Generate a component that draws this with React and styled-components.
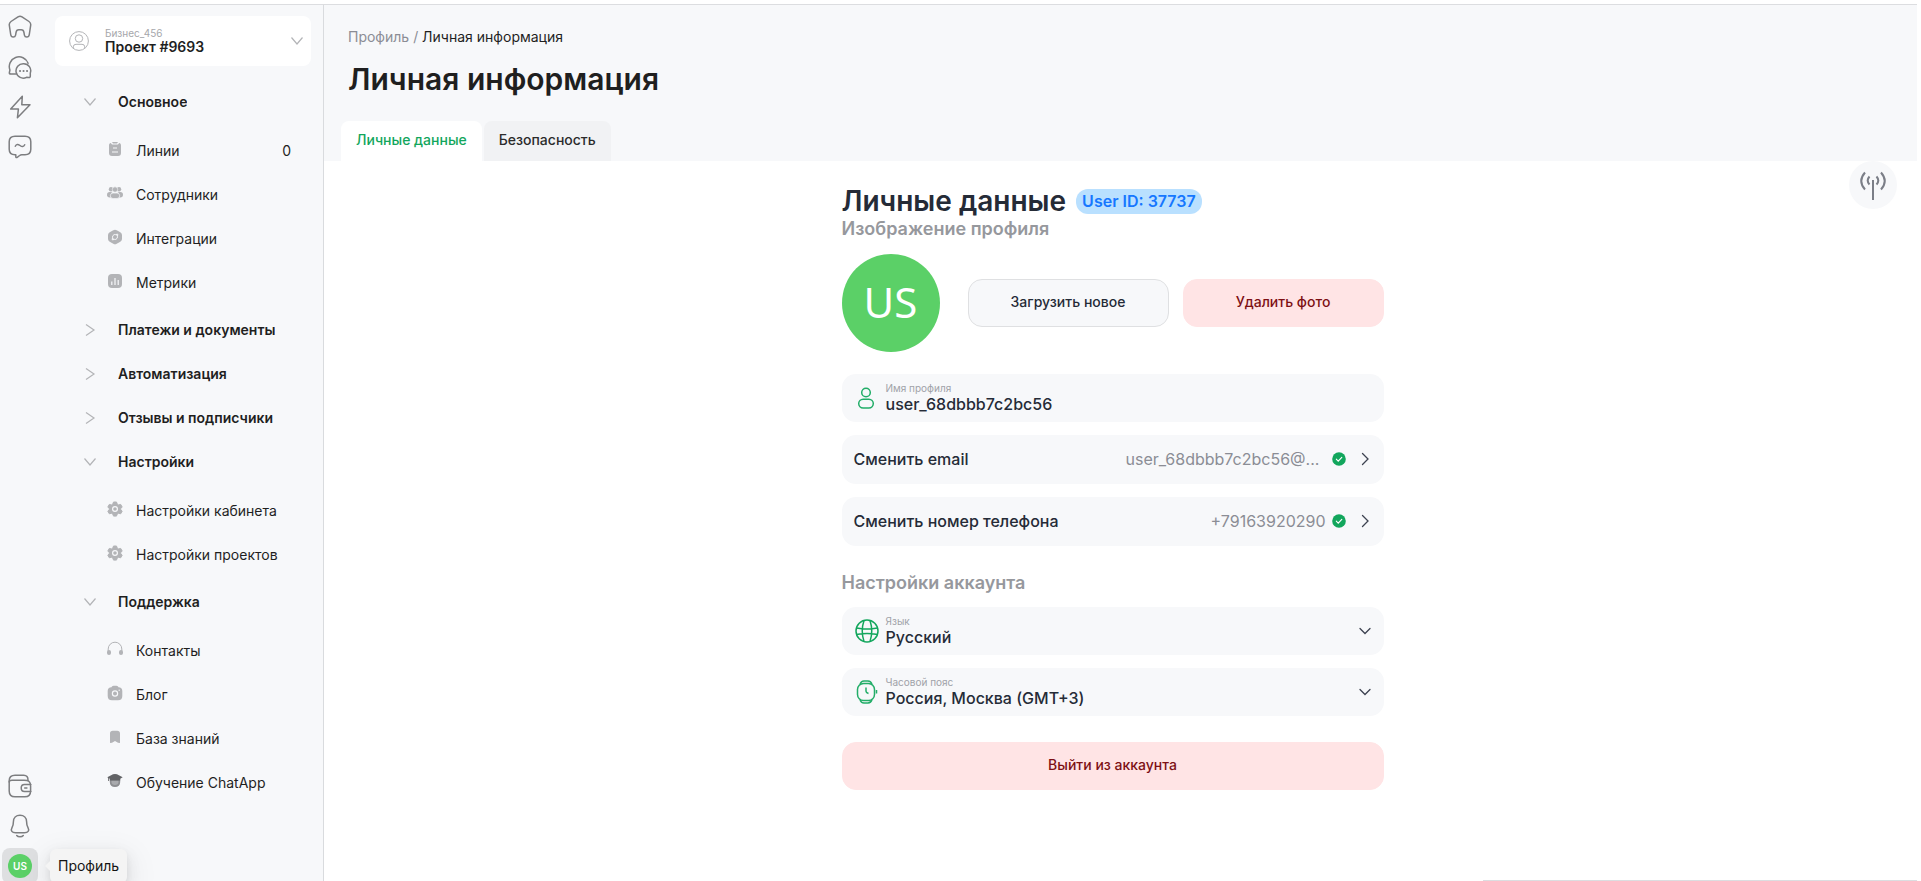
import { useState } from 'react';
import styled, { createGlobalStyle } from 'styled-components';

const sections = [
  {
    title: 'Основное',
    items: [
      { label: 'Линии', icon: 'lines', count: 0 },
      { label: 'Сотрудники', icon: 'team' },
      { label: 'Интеграции', icon: 'integrations' },
      { label: 'Метрики', icon: 'metrics' },
    ],
  },
  { title: 'Платежи и документы', items: [] },
  { title: 'Автоматизация', items: [] },
  { title: 'Отзывы и подписчики', items: [] },
  {
    title: 'Настройки',
    items: [
      { label: 'Настройки кабинета', icon: 'gear' },
      { label: 'Настройки проектов', icon: 'gear' },
    ],
  },
  {
    title: 'Поддержка',
    items: [
      { label: 'Контакты', icon: 'headphones' },
      { label: 'Блог', icon: 'camera' },
      { label: 'База знаний', icon: 'bookmark' },
      { label: 'Обучение ChatApp', icon: 'education' },
    ],
  },
];

const tabs = ['Личные данные', 'Безопасность'];

const menuIcons = {
  lines: (
    <>
      <path d="M2 4.5C2 3 2.7 2.2 3.800 2L5 3.500h6L12.200 2C13.300 2.200 14 3 14 4.500V12c0 2-1 3-3 3H5c-2 0-3-1-3-3z" />
      <path d="M5 1h6l-1 1.500H6z" />
      <path d="M6 7h4M5 11h6" stroke="#f7f8fa" strokeWidth="1.200" />
    </>
  ),
  team: (
    <>
      <circle cx="4" cy="4.200" r="2.200" />
      <circle cx="12" cy="4.200" r="2.200" />
      <rect x="0" y="7" width="6" height="5.500" rx="2.700" />
      <rect x="10" y="7" width="6" height="5.500" rx="2.700" />
      <circle cx="8" cy="4.500" r="2.700" stroke="#f7f8fa" strokeWidth=".6" />
      <rect x="3.300" y="8" width="9.400" height="5.600" rx="2.800" stroke="#f7f8fa" strokeWidth=".7" />
    </>
  ),
  integrations: (
    <>
      <path d="M6.300 1.200Q8 .2 9.700 1.200l3.600 2Q15 4.200 15 6v4q0 1.800-1.700 2.800l-3.600 2q-1.700 1-3.400 0l-3.600-2Q1 11.800 1 10V6q0-1.800 1.700-2.800z" />
      <path d="M5.500 8.800l-.3 2 2-.3M10.500 7.200l.3-2-2 .3M6.300 9.700a2.400 2.400 0 0 1 2.500-4M9.700 6.300a2.400 2.400 0 0 1-2.500 4" fill="none" stroke="#f7f8fa" />
    </>
  ),
  metrics: (
    <>
      <rect x="1" y="1" width="14" height="14" rx="4" />
      <path d="M4.800 8.500V12M8 5v7M11.200 7v5" stroke="#f7f8fa" strokeWidth="1.200" />
    </>
  ),
  gear: (
    <>
      <path
        d="M6.500 1h3l.6 2 1.500.9 2.100-.5 1.500 2.600-1.400 1.500v1.200l1.400 1.500-1.500 2.600-2.100-.5-1.500.9-.6 1.900h-3l-.6-1.900-1.500-.9-2.100.5L.8 10.200l1.400-1.500V7.500L.8 6l1.500-2.600 2.100.5L5.900 3z"
        stroke="#b3b4b7"
        strokeLinejoin="round"
      />
      <circle cx="8" cy="8" r="2.400" fill="none" stroke="#f7f8fa" strokeWidth="1.200" />
    </>
  ),
  headphones: (
    <>
      <path d="M1.200 10V8a6.800 6.800 0 0 1 13.600 0v2" fill="none" stroke="#b3b4b7" />
      <rect x="0" y="9" width="4" height="5" rx="2" />
      <rect x="12" y="9" width="4" height="5" rx="2" />
    </>
  ),
  camera: (
    <>
      <path d="M4.500 2.200C5 1 6 .7 8 .7s3 .3 3.500 1.500C14 2.200 15.300 3.500 15.300 6v5c0 2.800-1.300 4.200-4.300 4.200H5C2 15.200.7 13.800.7 11V6c0-2.500 1.300-3.800 3.800-3.800z" />
      <circle cx="8" cy="8.500" r="2.600" fill="none" stroke="#f7f8fa" strokeWidth="1.200" />
      <path d="M11.500 5.200H13" stroke="#f7f8fa" />
    </>
  ),
  bookmark: <path d="M3 4.500C3 2.600 4 1.700 5.800 1.700h4.400c1.800 0 2.800.9 2.800 2.800V14l-2-.2-3-1.800-3 1.800L3 14z" />,
  education: (
    <>
      <path d="M2.800 5h10.400v4c0 3.200-2 5-5.200 5s-5.200-1.800-5.200-5z" fill="#8d8e91" />
      <path d="M4.500 7.500h7V9c0 2-1.500 3-3.500 3s-3.500-1-3.500-3z" fill="#a9aaad" />
      <path d="M.3 4.200L6 1.300Q8 .5 10 1.300l5.700 2.900-2.500 1.600v1.700H2.800V5.800L1.800 5.300V8H1V4.800z" fill="#626366" />
    </>
  ),
};

const railIcons = {
  home: <path d="M10 1.800q2-1.200 4 0l7 4.700q2 1.400 1.700 3.700l-1.400 9.300q-.4 2.600-2.500 2.600-2 0-2.400-2l-.4-2.500q-.4-2.800-2.800-2.800h-2.400q-2.400 0-2.800 2.800l-.4 2.500q-.4 2-2.400 2-2.100 0-2.500-2.600L1.300 10.200Q1 7.900 3 6.500z" />,
  chats: (
    <>
      <path d="M8 19H2.800q-1.700 0-1.400-1.500L1.900 15A9.700 9.700 0 1 1 20.100 8.200" />
      <path d="M15.500 8.700a7 7 0 0 1 6.800 9.400v3q0 1.500-1.500 1.400l-2.300-.2a7.200 7.200 0 1 1-3-13.600z" />
      <path d="M12 16h.1M15.500 16h.1M19 16h.1" strokeWidth="2" />
    </>
  ),
  bolt: <path d="M14.300 1.200L2.700 14.100h7.700l-1 8.700L22 9.700h-8.200z" />,
  message: (
    <>
      <path d="M7 1.200h10q5.800 0 5.800 5.500v7.500q0 5.500-5.800 5.500h-3.200q-1.200 0-2.200.8l-2.100 1.600q-1.700 1.200-1.700-.7v-1.700H7q-5.800 0-5.800-5.500V6.700Q1.200 1.200 7 1.200z" />
      <path d="M7.300 11.200c1-2.200 2.700-2.200 4.700-.7s3.700 1.500 4.700-.7" />
    </>
  ),
  wallet: (
    <>
      <path d="M1.200 8v9q0 5.800 5.800 5.800h9.800q5.800 0 5.800-5.800v-5q0-4.500-3.500-5.500-1-.3-3-.3H4Q1.200 6.200 1.200 8z" />
      <path d="M1.200 8V6.700Q1.200 1.200 7 1.200h8.700q4.500 0 4.300 5.200" />
      <path d="M22.800 10.500h-6.300q-3.300 0-3.300 3.500t3.300 3.500h6.300M16.700 14h2.200" />
    </>
  ),
  bell: (
    <>
      <path d="M12 1.200c-4 0-6.600 2.800-6.600 6.500 0 3.200-.4 4.200-1.400 6-1.800 3.200.2 5 3.500 5h9c3.300 0 5.300-1.800 3.500-5-1-1.800-1.400-2.800-1.400-6 0-3.700-2.600-6.500-6.600-6.500z" />
      <path d="M8.700 21.500c1.500 1.700 5.100 1.700 6.600 0" />
    </>
  ),
};

const RailIcon = ({ name }) => (
  <svg width="24" height="24" viewBox="0 0 24 24" fill="none" stroke="#7d7e80" strokeWidth="1.500" strokeLinecap="round" strokeLinejoin="round">
    {railIcons[name]}
  </svg>
);

const Chevron = ({ direction = 'down', color = '#b3b4b7' }) => (
  <svg width="12" height="12" viewBox="0 0 12 12" fill="none" stroke={color} strokeWidth="1.200">
    <path d={direction === 'down' ? 'M.5 2.500L6 9l5.500-6.500' : 'M2 .5L10 6l-8 5.500'} />
  </svg>
);

const FieldChevron = ({ direction }) => (
  <svg width="14" height="14" viewBox="0 0 14 14" fill="none" stroke="#3d4250" strokeWidth="1.300" strokeLinecap="round">
    <path d={direction === 'down' ? 'M2 4.500l5 5 5-5' : 'M4.500 1.500L10 7l-5.500 5.500'} />
  </svg>
);

const Verified = () => (
  <svg width="14" height="14" viewBox="0 0 14 14">
    <circle cx="7" cy="7" r="6.800" fill="#12a65c" />
    <path d="M4.300 7.200l1.900 1.900 3.600-3.800" fill="none" stroke="#fff" strokeWidth="1.100" strokeLinecap="round" />
  </svg>
);

const App = () => {
  const [currentTab, setCurrentTab] = useState(tabs[0]);

  return (
    <>
      <GlobalStyle />
      <StShell>
        <StRail aria-label="Разделы">
          <StRailGroup>
            {['home', 'chats', 'bolt', 'message'].map((name) => (
              <StRailButton key={name}>
                <RailIcon name={name} />
              </StRailButton>
            ))}
          </StRailGroup>
          <StRailGroup $bottom>
            <StRailButton>
              <RailIcon name="wallet" />
            </StRailButton>
            <StRailButton>
              <RailIcon name="bell" />
            </StRailButton>
            <StRailButton $active>
              <StSmallAvatar>US</StSmallAvatar>
              <StTooltip role="tooltip">Профиль</StTooltip>
            </StRailButton>
          </StRailGroup>
        </StRail>

        <StSidebar>
          <StProjectButton>
            <svg width="20" height="20" viewBox="0 0 20 20" fill="none" stroke="#b3b4b7">
              <circle cx="10" cy="10" r="9.400" />
              <circle cx="10" cy="7.500" r="3.700" />
              <path d="M4.300 17.300v-1.500q0-2.500 2.700-2.500h6q2.700 0 2.700 2.500v1.500" />
            </svg>
            <StProjectText>
              <StProjectOwner>Бизнес_456</StProjectOwner>
              <StProjectName>Проект #9693</StProjectName>
            </StProjectText>
            <Chevron />
          </StProjectButton>

          <nav>
            {sections.map(({ title, items }) => (
              <div key={title}>
                <StSectionButton aria-expanded={items.length > 0}>
                  <Chevron direction={items.length ? 'down' : 'right'} />
                  <StSectionTitle>{title}</StSectionTitle>
                </StSectionButton>
                {items.length > 0 && (
                  <StMenu>
                    {items.map(({ label, icon, count }) => (
                      <li key={label}>
                        <StMenuLink href="#">
                          <StMenuIcon viewBox="0 0 16 16">{menuIcons[icon]}</StMenuIcon>
                          <span>{label}</span>
                          {count !== undefined && <StCount>{count}</StCount>}
                        </StMenuLink>
                      </li>
                    ))}
                  </StMenu>
                )}
              </div>
            ))}
          </nav>
        </StSidebar>

        <StMain>
          <StHeader>
            <StBreadcrumbs>
              <a href="#">Профиль</a> / <span>Личная информация</span>
            </StBreadcrumbs>
            <StPageTitle>Личная информация</StPageTitle>
            <StTabs role="tablist">
              {tabs.map((tab) => (
                <StTab
                  key={tab}
                  role="tab"
                  aria-selected={currentTab === tab}
                  $current={currentTab === tab}
                  onClick={() => setCurrentTab(tab)}
                >
                  {tab}
                </StTab>
              ))}
            </StTabs>
          </StHeader>

          <StContent>
            <StSignalButton aria-label="Статус соединения">
              <svg width="28" height="30" viewBox="0 0 28 30" fill="none" stroke="#7b7e87" strokeWidth="2">
                <path d="M14 10v20" />
                <path d="M10.500 6.500q-3.600 4 0 8M17.500 6.500q3.600 4 0 8M6 2.500q-7.500 8.500 0 17M22 2.500q7.500 8.500 0 17" />
              </svg>
            </StSignalButton>

            <StProfile>
              <StTitleRow>
                <StTitle>Личные данные</StTitle>
                <StUserId>User ID: 37737</StUserId>
              </StTitleRow>
              <StSubtitle>Изображение профиля</StSubtitle>

              <StPhotoRow>
                <StAvatar>US</StAvatar>
                <StPhotoButtons>
                  <StButton>Загрузить новое</StButton>
                  <StButton $danger>Удалить фото</StButton>
                </StPhotoButtons>
              </StPhotoRow>

              <StFields>
                <StField>
                  <StFieldIcon>
                    <svg width="22" height="22" viewBox="0 0 22 22" fill="none" stroke="#22ad68" strokeWidth="1.500">
                      <circle cx="11" cy="5.500" r="4.300" />
                      <rect x="3.700" y="12.200" width="14.600" height="8.800" rx="4.400" />
                    </svg>
                  </StFieldIcon>
                  <StFieldText>
                    <StLabel htmlFor="profile-name">Имя профиля</StLabel>
                    <StInput id="profile-name" defaultValue="user_68dbbb7c2bc56" />
                  </StFieldText>
                </StField>
                <StLinkField>
                  Сменить email
                  <StFieldValue>
                    <StEllipsis>user_68dbbb7c2bc56@...</StEllipsis>
                    <Verified />
                  </StFieldValue>
                  <FieldChevron />
                </StLinkField>
                <StLinkField>
                  Сменить номер телефона
                  <StFieldValue>
                    +79163920290
                    <Verified />
                  </StFieldValue>
                  <FieldChevron />
                </StLinkField>
              </StFields>

              <StSubtitle $spaced>Настройки аккаунта</StSubtitle>

              <StFields>
                <StField>
                  <StFieldIcon>
                    <svg width="24" height="24" viewBox="0 0 24 24" fill="none" stroke="#12a65c" strokeWidth="1.500">
                      <circle cx="12" cy="12" r="11" />
                      <path d="M9 1.500q-3.500 10.500 0 21M15 1.500q3.500 10.500 0 21M1.500 9q10.500 2 21 0M1.500 15.500q10.500-2 21 0" />
                    </svg>
                  </StFieldIcon>
                  <StFieldText>
                    <StLabel htmlFor="language">Язык</StLabel>
                    <StSelect id="language">
                      <option>Русский</option>
                    </StSelect>
                  </StFieldText>
                  <FieldChevron direction="down" />
                </StField>
                <StField>
                  <StFieldIcon>
                    <svg width="24" height="24" viewBox="0 0 24 24" fill="none" stroke="#22ad68" strokeWidth="1.500">
                      <rect x="2.500" y="3.500" width="17" height="17" rx="6" />
                      <path d="M5 4.500q1-3.500 4-3.500h4q3 0 4 3.500M5 19.500q1 3.500 4 3.500h4q3 0 4-3.500M21.500 10v3.500M11 7.500v3.700q0 1.300 2.500 2.300" />
                    </svg>
                  </StFieldIcon>
                  <StFieldText>
                    <StLabel htmlFor="timezone">Часовой пояс</StLabel>
                    <StSelect id="timezone">
                      <option>Россия, Москва (GMT+3)</option>
                    </StSelect>
                  </StFieldText>
                  <FieldChevron direction="down" />
                </StField>
              </StFields>

              <StLogout $danger>Выйти из аккаунта</StLogout>
            </StProfile>
            <StDockEdge />
          </StContent>
        </StMain>
      </StShell>
    </>
  );
};

export default App;

const GlobalStyle = createGlobalStyle`
  * {
    box-sizing: border-box;
  }

  body {
    margin: 0;
    background: #fff;
    color: #1f1f1f;
    font-family: Inter, 'Liberation Sans', sans-serif;
    font-size: 14px;
    line-height: 20px;
  }

  button,
  input,
  select {
    margin: 0;
    padding: 0;
    border: 0;
    background: none;
    color: inherit;
    font: inherit;
  }

  button {
    cursor: pointer;
  }

  a {
    color: inherit;
    text-decoration: none;
  }

  svg {
    display: block;
    flex-shrink: 0;
  }
`;

const StShell = styled.div`
  display: flex;
  height: 100vh;
  padding: 4px 4px 0 0;
  overflow: hidden;
`;

const StRail = styled.nav`
  flex-shrink: 0;
  width: 44px;
  padding: 4px 2px 0;
  display: flex;
  flex-direction: column;
  justify-content: space-between;
  border-top: 1px solid #dcdde0;
  background: #f7f8fa;
`;

const StRailGroup = styled.div`
  display: flex;
  flex-direction: column;
  gap: 4px;
  /* the last item runs slightly under the window edge */
  margin-bottom: ${({ $bottom }) => ($bottom ? '-3px' : '0')};
`;

const StRailButton = styled.button.attrs({
  type: 'button',
})`
  position: relative;
  width: 36px;
  height: 36px;

  display: flex;
  justify-content: center;
  align-items: center;

  border-radius: 8px;
  background: ${({ $active }) => ($active ? '#dedfe1' : 'transparent')};
`;

const StSmallAvatar = styled.span`
  width: 24px;
  height: 24px;
  border-radius: 50%;
  background: #5bd067;
  color: #fff;
  font-size: 10px;
  font-weight: 600;
  line-height: 24px;
  text-align: center;
`;

const StTooltip = styled.span`
  position: absolute;
  z-index: 1;
  left: 48px;
  top: 1px;
  padding: 7px 8px;
  border-radius: 6px;
  background: #f4f4f4;
  box-shadow:
    0 6px 16px rgba(0, 0, 0, 0.08),
    0 3px 6px rgba(0, 0, 0, 0.06),
    0 9px 28px 8px rgba(0, 0, 0, 0.05);
  color: #141414;

  &::before {
    content: '';
    position: absolute;
    left: -5px;
    top: 12px;
    border: 5px solid transparent;
    border-left-width: 0;
    border-right-color: #f4f4f4;
  }
`;

const StSidebar = styled.aside`
  flex-shrink: 0;
  width: 280px;
  padding: 11px 12px 0 11px;
  border-top: 1px solid #dcdde0;
  border-right: 1px solid #d9dbde;
  background: #f7f8fa;
`;

const StProjectButton = styled.button.attrs({
  type: 'button',
})`
  width: 100%;
  height: 50px;
  margin-bottom: 14px;
  padding: 0 8px 0 14px;

  display: flex;
  align-items: center;
  gap: 16px;

  border-radius: 8px;
  background: #fff;
  text-align: left;
`;

const StProjectText = styled.span`
  flex: 1;
  display: flex;
  flex-direction: column;
`;

const StProjectOwner = styled.span`
  font-size: 10px;
  line-height: 12px;
  color: #a6a7ab;
`;

const StProjectName = styled.span`
  font-weight: 600;
  line-height: 16px;
`;

const StSectionButton = styled.button.attrs({
  type: 'button',
})`
  width: 100%;
  height: 44px;
  padding: 0 32px 0 29px;

  display: flex;
  align-items: center;
  gap: 22px;
`;

const StSectionTitle = styled.span`
  overflow: hidden;
  white-space: nowrap;
  font-weight: 600;
`;

const StMenu = styled.ul`
  margin: 0;
  padding: 5px 0 3px;
  list-style: none;
`;

const StMenuLink = styled.a`
  height: 44px;
  padding: 0 20px 0 52px;

  display: flex;
  align-items: center;
  gap: 13px;
`;

const StMenuIcon = styled.svg`
  width: 16px;
  height: 16px;
  margin-bottom: 4px;
  fill: #b3b4b7;
`;

const StCount = styled.span`
  margin-left: auto;
`;

const StMain = styled.main`
  flex: 1;
  min-width: 0;
  display: flex;
  flex-direction: column;
`;

const StHeader = styled.header`
  padding: 22px 17px 0;
  border-top: 1px solid #dcdde0;
  background: #f7f8fa;
`;

const StBreadcrumbs = styled.nav`
  padding: 0 7px;
  color: #8b8d95;

  span {
    color: #1f1f1f;
  }
`;

const StPageTitle = styled.h1`
  margin: 12px 0 22px;
  padding: 0 7px;
  font-size: 30px;
  font-weight: 600;
  line-height: 40px;
`;

const StTabs = styled.div`
  display: flex;
  gap: 2px;
`;

const StTab = styled.button.attrs({
  type: 'button',
})`
  height: 40px;
  padding: 0 15px 2px;
  border-radius: 8px 8px 0 0;
  background: ${({ $current }) => ($current ? '#fff' : '#f1f2f4')};
  color: ${({ $current }) => ($current ? '#12a65c' : '#2b2b2b')};
  font-weight: 500;
`;

const StContent = styled.section`
  position: relative;
  flex: 1;
  display: flex;
  flex-direction: column;
`;

const StSignalButton = styled.button.attrs({
  type: 'button',
})`
  position: absolute;
  top: 0;
  right: 20px;
  width: 48px;
  height: 48px;

  display: flex;
  justify-content: center;
  align-items: center;

  border-radius: 50%;
  background: #f7f8fa;
`;

const StProfile = styled.div`
  width: 100%;
  max-width: 558px;
  margin: 0 auto;
  padding: 24px 16px 0 0;
`;

const StTitleRow = styled.div`
  display: flex;
  align-items: center;
  gap: 10px;
`;

const StTitle = styled.h2`
  margin: 0;
  font-size: 28px;
  font-weight: 600;
  line-height: 32px;
  color: #252b37;
`;

const StUserId = styled.span`
  padding: 2px 6px 3px;
  border-radius: 12px;
  background: #b9e0ff;
  color: #1677ff;
  font-size: 16px;
  font-weight: 600;
`;

const StSubtitle = styled.h3`
  margin: ${({ $spaced }) => ($spaced ? '25px 0 12px' : '0 0 13px')};
  font-size: 18px;
  font-weight: 600;
  line-height: 24px;
  color: #96989d;
`;

const StPhotoRow = styled.div`
  display: flex;
  align-items: center;
  gap: 28px;
  margin-bottom: 22px;
`;

const StAvatar = styled.div`
  flex-shrink: 0;
  width: 98px;
  height: 98px;
  border-radius: 50%;
  background: #5bd067;
  color: #fff;
  font-family: 'Noto Sans', sans-serif;
  font-size: 42px;
  line-height: 96px;
  text-align: center;
`;

const StPhotoButtons = styled.div`
  flex: 1;
  display: flex;
  gap: 14px;
`;

const StButton = styled.button.attrs({
  type: 'button',
})`
  flex: 1;
  height: 48px;
  padding-bottom: 2px;
  border: 1px solid ${({ $danger }) => ($danger ? '#ffe4e5' : '#dfe0e2')};
  border-radius: 14px;
  background: ${({ $danger }) => ($danger ? '#ffe4e5' : '#f7f8fa')};
  color: ${({ $danger }) => ($danger ? '#7d1014' : '#252b37')};
  font-weight: 500;
`;

const StLogout = styled(StButton)`
  width: 100%;
  margin-top: 26px;
`;

const StFields = styled.div`
  display: flex;
  flex-direction: column;
  gap: 13px;
`;

const StField = styled.div`
  height: 48px;
  padding: 0 12px;

  display: flex;
  align-items: center;

  border-radius: 14px;
  background: #f7f8fa;
`;

const StFieldIcon = styled.span`
  width: 32px;
  display: flex;
  padding-left: 1px;
`;

const StFieldText = styled.div`
  flex: 1;
  display: flex;
  flex-direction: column;
`;

const StLabel = styled.label`
  font-size: 10px;
  line-height: 12px;
  color: #a0a2a8;
`;

const StInput = styled.input`
  height: 20px;
  outline: none;
  color: #252b37;
  font-size: 16px;
  font-weight: 500;
`;

const StSelect = styled.select`
  appearance: none;
  height: 20px;
  outline: none;
  color: #252b37;
  font-size: 16px;
  font-weight: 500;
`;

const StLinkField = styled.button.attrs({
  type: 'button',
})`
  height: 49px;
  padding: 0 12px 1px;

  display: flex;
  align-items: center;
  gap: 12px;

  border-radius: 14px;
  background: #f7f8fa;
  color: #252b37;
  font-size: 16px;
  font-weight: 500;
`;

const StFieldValue = styled.span`
  min-width: 0;
  margin-left: auto;
  display: flex;
  align-items: center;
  gap: 6px;
  color: #8b8d95;
  font-weight: 400;
`;

const StEllipsis = styled.span`
  width: 200px;
  overflow: hidden;
  text-overflow: ellipsis;
  white-space: nowrap;
  text-align: left;
`;

const StDockEdge = styled.div`
  width: 434px;
  height: 1px;
  margin: auto 0 0 auto;
  background: #dcdde0;
`;
